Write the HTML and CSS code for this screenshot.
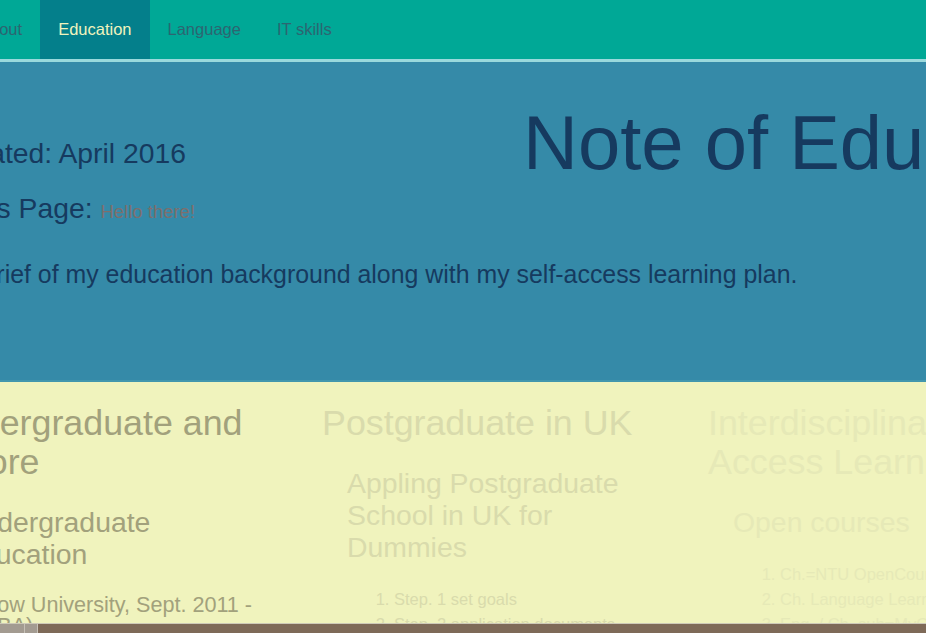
FILE: index.html
```html
<!DOCTYPE html>
<html lang="en">
<head>
<meta charset="utf-8">
<title>Note of Education</title>
<link rel="stylesheet" href="styles.css">
</head>
<body>
<div class="page">
  <nav class="nav">
    <a href="#">About</a>
    <a href="#" class="active">Education</a>
    <a href="#">Language</a>
    <a href="#">IT skills</a>
  </nav>
  <header class="header">
    <div class="header-top">
      <div class="meta">
        <p>Last Updated: April 2016</p>
        <p>About This Page: <span class="hello">Hello there!</span></p>
      </div>
      <h1 class="title">Note of Education</h1>
    </div>
    <p class="intro">Here is a brief of my education background along with my self-access learning plan.</p>
  </header>
  <section class="courses">
    <div class="col c1">
      <h2>Undergraduate and Before</h2>
      <h3>Undergraduate Education</h3>
      <p>Soochow University, Sept. 2011 - 2015 (BA)</p>
    </div>
    <div class="col c2">
      <h2>Postgraduate in UK</h2>
      <h3>Appling Postgraduate School in UK for Dummies</h3>
      <ol>
        <li>Step. 1 set goals</li>
        <li>Step. 2 application documents</li>
        <li>Step. 3 offers</li>
      </ol>
    </div>
    <div class="col c3">
      <h2>Interdisciplinary Self-Access Learning</h2>
      <h3>Open courses</h3>
      <ol>
        <li>Ch.=NTU OpenCourseWare</li>
        <li>Ch. Language Learning</li>
        <li>Eng. / Ch. sub=MyOOC</li>
      </ol>
    </div>
  </section>
</div>
<div class="scrollbar"><div class="thumb"></div></div>
</body>
</html>
```
FILE: styles.css
```css
html, body {
  margin: 0;
  height: 100%;
  overflow: hidden;
  background: #f0f3bd;
  font-family: "Liberation Sans", Arial, sans-serif;
}

.page {
  margin-left: -124px;
  width: 1200px;
}

.nav {
  display: flex;
  height: 59px;
  padding-left: 85px;
  background: #00a896;
  border-bottom: 3px solid #9ad9dc;
}

.nav a {
  padding: 0 18px;
  font-size: 16.5px;
  line-height: 59px;
  color: #2d6571;
  text-decoration: none;
}

.nav a.active {
  background: #047f8b;
  color: #f0f3bd;
}

.header {
  background: #358aa8;
  color: #163a5f;
  padding-bottom: 91px;
  border-bottom: 2px solid #4296ad;
}

.header-top {
  display: flex;
  align-items: flex-start;
}

.meta {
  width: 647px;
  padding-top: 75px;
  flex: none;
}

.meta p {
  margin: 0;
  font-size: 28.3px;
  line-height: 32px;
}

.meta p + p {
  margin-top: 23px;
}

.hello {
  font-size: 18.5px;
  color: #7d6f6d;
}

.title {
  margin: 43px 0 0;
  font-size: 76px;
  line-height: 76px;
  font-weight: normal;
  white-space: nowrap;
}

.intro {
  margin: 32px 0 0;
  font-size: 24.9px;
  line-height: 29px;
}

.courses {
  display: grid;
  grid-template-columns: repeat(3, 340px);
  column-gap: 46px;
  padding-left: 58px;
}

.col h2 {
  margin: 22px 0 24px;
  font-size: 35.8px;
  line-height: 39px;
  font-weight: normal;
}

.c2 h2,
.c3 h2 {
  margin-left: 2px;
}

.col h3 {
  margin: 24px 0 24px 27px;
  font-size: 28.4px;
  line-height: 32px;
  font-weight: normal;
}

.col p {
  margin: 0 0 0 2px;
  font-size: 21.6px;
  line-height: 21px;
}

.col ol {
  margin: 0;
  padding-left: 74px;
  font-size: 16.5px;
  line-height: 25px;
}

.c1 { color: #a2a17c; }
.c2 { color: #d9dbac; }
.c3 { color: #e6e9b7; }

.scrollbar {
  position: fixed;
  left: 0;
  right: 0;
  bottom: 0;
  height: 9px;
  border-top: 1px solid #cdc9b8;
  background: #7e6a58;
}

.thumb {
  width: 37px;
  height: 100%;
  background: linear-gradient(to right, #a39b91 0 24px, #c6c0b6 24px 25px, #a39b91 25px);
  border-right: 1px solid #c8c2b8;
}
```
